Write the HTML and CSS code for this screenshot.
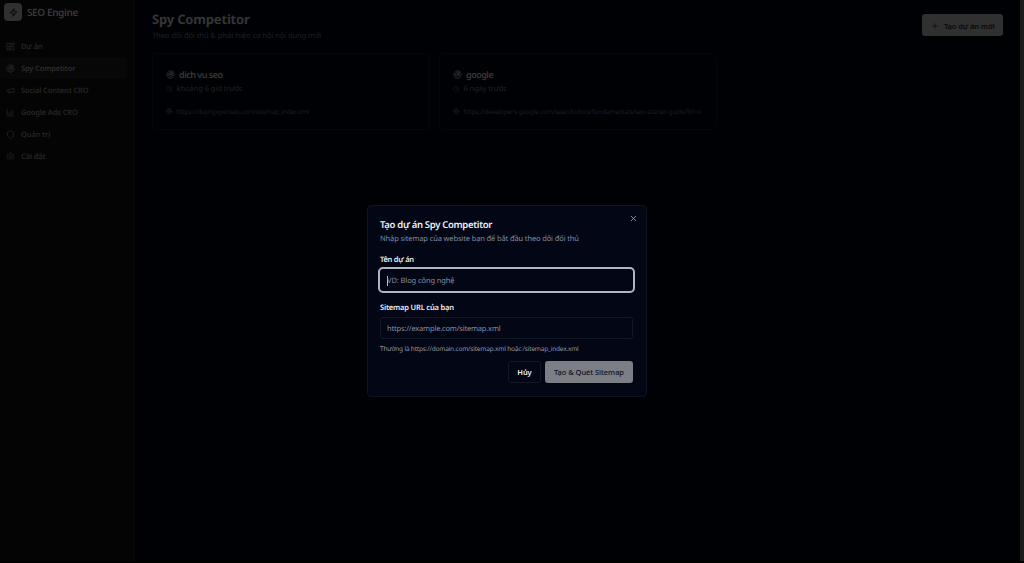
FILE: index.html
```
<!DOCTYPE html>
<html lang="vi">
<head>
<meta charset="utf-8">
<title>SEO Engine</title>
<link rel="stylesheet" href="styles.css">
</head>
<body>
<svg class="defs" width="0" height="0">
  <symbol id="radar" viewBox="0 0 24 24"><path d="M19.07 4.93A10 10 0 0 0 6.99 3.34M4 6h.01M2.29 9.62A10 10 0 1 0 21.31 8.35M16.24 7.76A6 6 0 1 0 8.23 16.67M12 18h.01M17.99 11.66A6 6 0 0 1 15.77 16.67"/><circle cx="12" cy="12" r="2"/><path d="m13.41 10.59 5.66-5.66"/></symbol>
  <symbol id="clock" viewBox="0 0 24 24"><circle cx="12" cy="12" r="10"/><path d="M12 6v6l4 2"/></symbol>
  <symbol id="globe" viewBox="0 0 24 24"><circle cx="12" cy="12" r="10"/><path d="M12 2a14.5 14.5 0 0 0 0 20 14.5 14.5 0 0 0 0-20M2 12h20"/></symbol>
</svg>
<div class="app">
  <aside class="sidebar">
    <div class="brand">
      <span class="logo"><svg class="icon" viewBox="0 0 24 24"><path d="M4 14a1 1 0 0 1-.78-1.63l9.9-10.2a.5.5 0 0 1 .86.46l-1.92 6.02A1 1 0 0 0 13 10h7a1 1 0 0 1 .78 1.63l-9.9 10.2a.5.5 0 0 1-.86-.46l1.92-6.02A1 1 0 0 0 11 14z"/></svg></span>
      <span class="brand-name">SEO Engine</span>
    </div>
    <nav class="nav">
      <a class="nav-item"><svg class="icon" viewBox="0 0 24 24"><rect x="3" y="3" width="7" height="9"/><rect x="14" y="3" width="7" height="5"/><rect x="14" y="12" width="7" height="9"/><rect x="3" y="16" width="7" height="5"/></svg><span class="t-projects">Dự án</span></a>
      <a class="nav-item active"><svg class="icon"><use href="#radar"/></svg><span class="t-spy">Spy Competitor</span></a>
      <a class="nav-item"><svg class="icon" viewBox="0 0 24 24"><path d="m3 11 18-5v12L3 14zM11.6 16.8a3 3 0 1 1-5.8-1.6"/></svg><span class="t-social">Social Content CRO</span></a>
      <a class="nav-item"><svg class="icon" viewBox="0 0 24 24"><path d="M3 3v16a2 2 0 0 0 2 2h16M18 17V5M13 17V9M8 17v-3"/></svg><span class="t-ads">Google Ads CRO</span></a>
      <a class="nav-item"><svg class="icon" viewBox="0 0 24 24"><path d="M20 13c0 5-3.5 7.5-7.66 8.95a1 1 0 0 1-.67-.01C7.5 20.5 4 18 4 13V6a1 1 0 0 1 1-1c2 0 4.5-1.2 6.24-2.72a1.17 1.17 0 0 1 1.52 0C14.51 3.81 17 5 19 5a1 1 0 0 1 1 1z"/></svg><span class="t-admin">Quản trị</span></a>
      <a class="nav-item"><svg class="icon" viewBox="0 0 24 24"><path d="M12.22 2h-.44a2 2 0 0 0-2 2v.18a2 2 0 0 1-1 1.73l-.43.25a2 2 0 0 1-2 0l-.15-.08a2 2 0 0 0-2.73.73l-.22.38a2 2 0 0 0 .73 2.73l.15.1a2 2 0 0 1 1 1.72v.51a2 2 0 0 1-1 1.74l-.15.09a2 2 0 0 0-.73 2.73l.22.38a2 2 0 0 0 2.73.73l.15-.08a2 2 0 0 1 2 0l.43.25a2 2 0 0 1 1 1.73V20a2 2 0 0 0 2 2h.44a2 2 0 0 0 2-2v-.18a2 2 0 0 1 1-1.73l.43-.25a2 2 0 0 1 2 0l.15.08a2 2 0 0 0 2.73-.73l.22-.39a2 2 0 0 0-.73-2.73l-.15-.08a2 2 0 0 1-1-1.74v-.5a2 2 0 0 1 1-1.74l.15-.09a2 2 0 0 0 .73-2.73l-.22-.38a2 2 0 0 0-2.73-.73l-.15.08a2 2 0 0 1-2 0l-.43-.25a2 2 0 0 1-1-1.73V4a2 2 0 0 0-2-2z"/><circle cx="12" cy="12" r="3"/></svg><span class="t-settings">Cài đặt</span></a>
    </nav>
  </aside>
  <main class="main">
    <header class="page-head">
      <div>
        <h1 class="page-title"><span>Spy Competitor</span></h1>
        <p class="page-sub"><span>Theo dõi đối thủ &amp; phát hiện cơ hội nội dung mới</span></p>
      </div>
      <button class="new-btn"><svg class="icon" viewBox="0 0 24 24"><path d="M5 12h14M12 5v14"/></svg><span>Tạo dự án mới</span></button>
    </header>
    <section class="cards">
      <article class="card">
        <h2 class="card-title"><svg class="icon"><use href="#radar"/></svg><span class="t-dichvu">dich vu seo</span></h2>
        <p class="card-time"><svg class="icon"><use href="#clock"/></svg><span class="t-hours">khoảng 6 giờ trước</span></p>
        <p class="card-url"><svg class="icon"><use href="#globe"/></svg><span class="t-url1">https://duynguyenseo.com/sitemap_index.xml</span></p>
      </article>
      <article class="card">
        <h2 class="card-title"><svg class="icon"><use href="#radar"/></svg><span class="t-google">google</span></h2>
        <p class="card-time"><svg class="icon"><use href="#clock"/></svg><span class="t-days">6 ngày trước</span></p>
        <p class="card-url"><svg class="icon"><use href="#globe"/></svg><span class="t-url2">https://developers.google.com/search/docs/fundamentals/seo-starter-guide?hl=vi</span></p>
      </article>
    </section>
  </main>
  <div class="scrollbar"></div>
</div>
<div class="overlay">
  <form class="dialog">
    <svg class="icon close" viewBox="0 0 24 24"><path d="M18 6 6 18M6 6l12 12"/></svg>
    <h2 class="dlg-title"><span>Tạo dự án Spy Competitor</span></h2>
    <p class="dlg-sub"><span>Nhập sitemap của website bạn để bắt đầu theo dõi đối thủ</span></p>
    <div class="label"><span class="t-name">Tên dự án</span></div>
    <div class="input focused"><i class="caret"></i><span class="t-ph1">VD: Blog công nghệ</span></div>
    <div class="label second"><span class="t-sitemap">Sitemap URL của bạn</span></div>
    <div class="input"><span class="t-ph2">https://example.com/sitemap.xml</span></div>
    <p class="hint"><span>Thường là https://domain.com/sitemap.xml hoặc /sitemap_index.xml</span></p>
    <div class="actions"><button type="button" class="btn cancel"><span>Hủy</span></button><button type="button" class="btn submit"><span>Tạo &amp; Quét Sitemap</span></button></div>
  </form>
</div>
</body>
</html>
```
FILE: styles.css
```
* { box-sizing: border-box; margin: 0; padding: 0; }
body { width: 1024px; height: 563px; overflow: hidden; background: #000104; font-family: "Noto Sans", "Open Sans", sans-serif; font-size: 7.5px; text-rendering: geometricPrecision; }
button { font: inherit; border: 0; }
span { white-space: nowrap; }
.defs { display: block; height: 0; }
.icon { fill: none; stroke: currentColor; stroke-width: 2; stroke-linecap: round; stroke-linejoin: round; flex: none; }
.app { display: flex; height: 563px; border-bottom: 2px solid #000; }
.sidebar { width: 135px; background: #040404; border-right: 2px solid #060607; }
.brand { display: flex; align-items: center; gap: 5px; height: 24px; padding-left: 4px; color: #393939; }
.brand-name { font-size: 10px; font-weight: 600; letter-spacing: -.4px; }
.logo { display: flex; align-items: center; justify-content: center; width: 18px; height: 18px; border-radius: 4px; background: #303030; color: #080808; }
.logo .icon { width: 9px; height: 9px; stroke-width: 2.6; }
.nav { padding: 11px 6px 0 0; }
.nav-item { display: flex; align-items: center; gap: 7px; height: 22px; padding: 1px 0 0 6px; color: #252525; font-weight: 600; letter-spacing: -.14px; }
.nav-item.active { background: #070707; color: #2d2d2d; border-radius: 3px; }
.nav-item .icon { width: 9px; height: 9px; }
.nav-item span { margin-left: -1px; }
.nav-item .t-spy { letter-spacing: -.16px; }
.main { flex: 1; padding: 11px 17px 0 17px; }
.page-head { display: flex; justify-content: space-between; height: 42px; }
.page-title { font-size: 13px; line-height: 17px; letter-spacing: -.18px; color: #353535; }
.page-sub { margin-top: 3px; line-height: 11px; letter-spacing: -.07px; color: #1d2024; }
.new-btn { display: flex; align-items: center; gap: 5px; width: 81px; height: 22px; margin-top: 3px; padding: 1px 0 0 9px; border-radius: 3px; background: #303030; color: #09090b; font-weight: 600; letter-spacing: -.1px; }
.new-btn .icon { width: 8px; height: 8px; }
.cards { display: grid; grid-template-columns: 278px 278px; gap: 9px; }
.card { height: 77px; padding: 13px 14px 0 13px; border: 1px solid #04060a; border-radius: 4px; }
.card-title { display: flex; align-items: center; gap: 4px; height: 14px; font-size: 9px; font-weight: 600; letter-spacing: -.5px; color: #383838; }
.card-title .icon { width: 9px; height: 9px; }
.card-time { display: flex; align-items: center; gap: 4px; height: 14px; margin-top: 1px; letter-spacing: -.05px; color: #1f2226; }
.card-time .icon { width: 6.5px; height: 6.5px; }
.card-time .t-days { letter-spacing: -.12px; }
.card-url { display: flex; align-items: center; gap: 4px; height: 10px; margin-top: 10px; font-size: 6.5px; letter-spacing: -.22px; color: #1d1f23; }
.t-url2 { letter-spacing: -.16px; }
.card-url .icon { width: 6.5px; height: 6.5px; }
.scrollbar { width: 4px; background: #1b1b1b; }
.overlay { position: absolute; inset: 0; display: flex; justify-content: center; padding-top: 205px; padding-right: 10px; }
.dialog { position: relative; width: 280px; height: 192px; padding: 12px 13px 0 12px; border: 1px solid #0d131f; border-radius: 4px; background: #020615; color: #eef0f4; }
.close { position: absolute; top: 8px; right: 8px; width: 9px; height: 9px; color: #b3b5bb; }
.dlg-title { font-size: 9.5px; line-height: 13px; font-weight: 600; letter-spacing: -.31px; }
.dlg-sub { margin-top: 2px; line-height: 12px; letter-spacing: -.13px; color: #838c9c; }
.label { margin-top: 10px; line-height: 11px; font-size: 7.5px; font-weight: 600; letter-spacing: -.26px; }
.label.second { margin-top: 10px; letter-spacing: -.17px; }
.input { display: flex; align-items: center; height: 22px; margin-top: 3px; padding: 2px 0 0 6px; border: 1px solid #111827; border-radius: 3px; color: #8790a0; letter-spacing: -.18px; }
.focused { height: 26px; margin: 1px -2px 0; padding-left: 7px; border: 2px solid #b1b5c1; border-radius: 5px; letter-spacing: -.1px; }
.caret { width: 1px; height: 10px; margin-right: -1px; background: #b9bdc6; }
.hint { margin-top: 4px; line-height: 11px; font-size: 6.5px; letter-spacing: -.19px; color: #8f97a5; }
.actions { display: flex; justify-content: flex-end; gap: 4px; margin-top: 7px; }
.btn { display: flex; align-items: center; justify-content: center; height: 22px; border-radius: 3px; font-weight: 600; }
.cancel { width: 33px; border: 1px solid #111827; background: #020615; color: #eef0f4; letter-spacing: -.1px; }
.submit { width: 88px; background: #7c7e85; color: #0d1221; font-weight: 500; letter-spacing: -.06px; }
```
